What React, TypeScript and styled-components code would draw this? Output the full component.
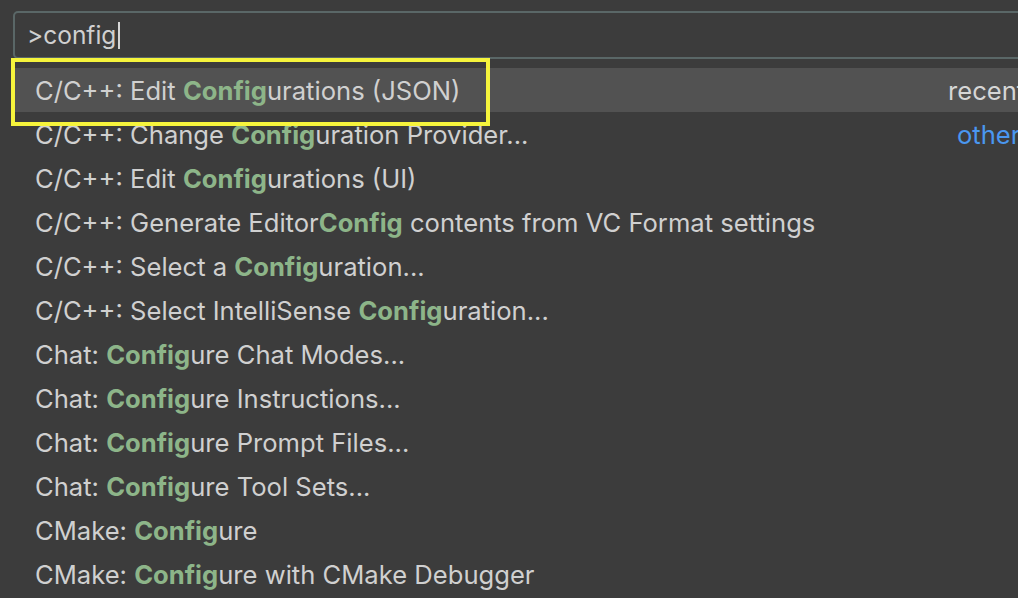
import React from 'react';
import styled, { createGlobalStyle } from 'styled-components';

const GlobalStyle = createGlobalStyle`
  html, body {
    margin: 0;
    padding: 0;
    background: #3c3c3c;
    overflow: hidden;
  }
  body {
    font-family: Inter, "Noto Sans", "DejaVu Sans", sans-serif;
    -webkit-font-smoothing: antialiased;
  }
`;

const Palette = styled.div`
  position: relative;
  padding: 11px 0 0 13px;
  width: 1060px;
  height: 598px;
  box-sizing: border-box;
`;

const InputBox = styled.div`
  display: flex;
  align-items: center;
  height: 48px;
  box-sizing: border-box;
  border: 2px solid #5a6767;
  border-radius: 5px;
  padding-left: 12px;
  font-size: 24.5px;
  color: #d0d0d0;
`;

const Caret = styled.span`
  display: inline-block;
  width: 2px;
  height: 27px;
  margin-left: 2px;
  background: #d6d6d6;
`;

const List = styled.div`
  margin-top: 9px;
`;

const Row = styled.div<{ active?: boolean }>`
  display: flex;
  align-items: center;
  height: 44px;
  padding-left: 22px;
  background: ${p => (p.active ? '#525252' : 'transparent')};
  font-size: 25.6px;
  color: #d0d0d0;
  white-space: nowrap;
`;

const Title = styled.span`
  flex: 0 0 913px;
  overflow: hidden;
`;

const Match = styled.span`
  color: #8db589;
  font-weight: 700;
`;

const Label = styled.span<{ tone?: 'plain' | 'link'; indent?: number }>`
  padding-left: ${p => p.indent || 0}px;
  color: ${p => (p.tone === 'link' ? '#4a97f0' : '#d6d6d6')};
`;

const Highlight = styled.div`
  position: absolute;
  left: 11px;
  top: 58px;
  width: 479px;
  height: 68px;
  box-sizing: border-box;
  border: 4px solid #f6f43c;
  pointer-events: none;
`;

interface Item {
  before: string;
  match: string;
  after: string;
  label?: string;
  tone?: 'plain' | 'link';
  indent?: number;
}

const items: Item[] = [
  { before: 'C/C++: Edit ', match: 'Config', after: 'urations (JSON)', label: 'recently used', tone: 'plain' },
  { before: 'C/C++: Change ', match: 'Config', after: 'uration Provider...', label: 'other commands', tone: 'link', indent: 9 },
  { before: 'C/C++: Edit ', match: 'Config', after: 'urations (UI)' },
  { before: 'C/C++: Generate Editor', match: 'Config', after: ' contents from VC Format settings' },
  { before: 'C/C++: Select a ', match: 'Config', after: 'uration...' },
  { before: 'C/C++: Select IntelliSense ', match: 'Config', after: 'uration...' },
  { before: 'Chat: ', match: 'Config', after: 'ure Chat Modes...' },
  { before: 'Chat: ', match: 'Config', after: 'ure Instructions...' },
  { before: 'Chat: ', match: 'Config', after: 'ure Prompt Files...' },
  { before: 'Chat: ', match: 'Config', after: 'ure Tool Sets...' },
  { before: 'CMake: ', match: 'Config', after: 'ure' },
  { before: 'CMake: ', match: 'Config', after: 'ure with CMake Debugger' },
];

export default function App() {
  return (
    <>
      <GlobalStyle />
      <Palette>
        <InputBox>
          &gt;config
          <Caret />
        </InputBox>
        <List>
          {items.map((item, i) => (
            <Row key={i} active={i === 0}>
              <Title>
                {item.before}
                <Match>{item.match}</Match>
                {item.after}
              </Title>
              {item.label && (
                <Label tone={item.tone} indent={item.indent}>
                  {item.label}
                </Label>
              )}
            </Row>
          ))}
        </List>
        <Highlight />
      </Palette>
    </>
  );
}
